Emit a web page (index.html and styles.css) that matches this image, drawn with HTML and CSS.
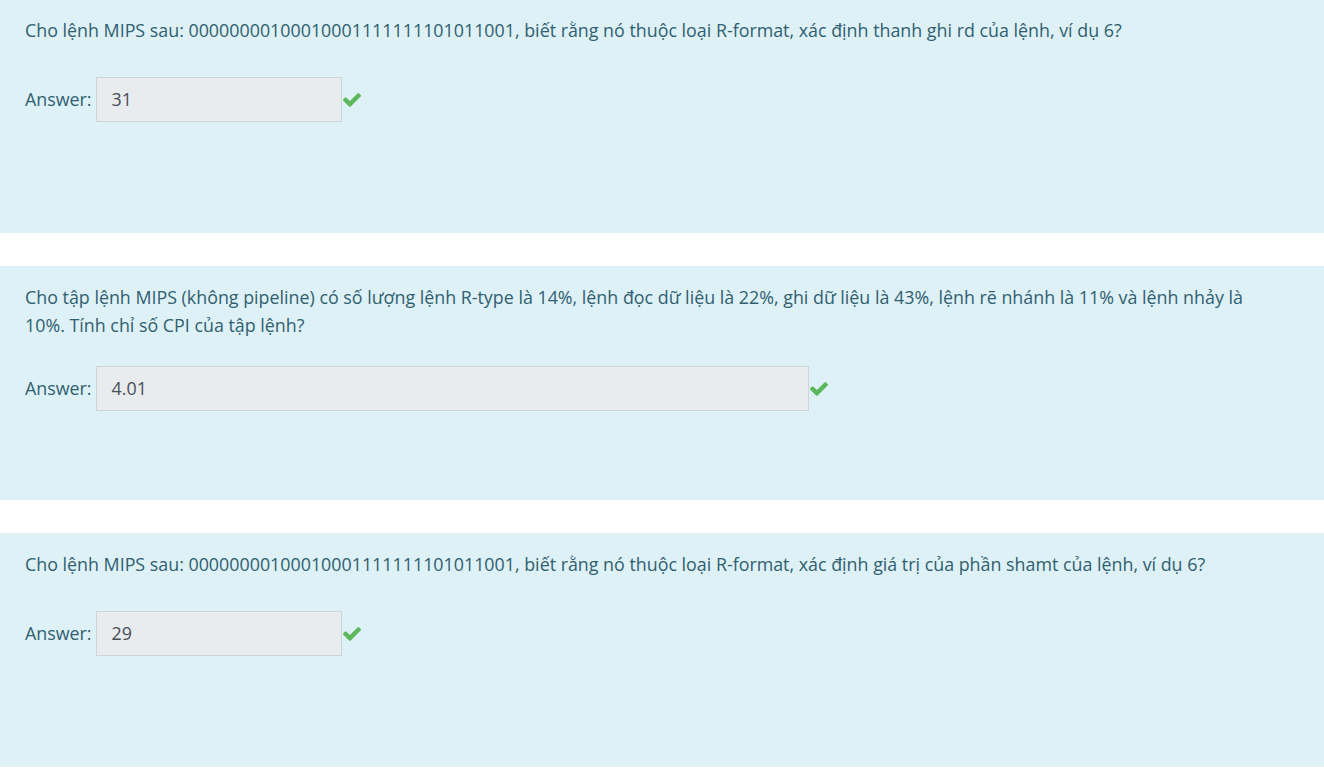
FILE: index.html
```html
<!DOCTYPE html>
<html lang="vi">
<head>
<meta charset="utf-8">
<title>Quiz</title>
<link rel="stylesheet" href="styles.css">
</head>
<body>
<div class="quiz">
  <div class="que">
    <div class="qtext">Cho lệnh MIPS sau: 00000000100010001111111101011001, biết rằng nó thuộc loại R-format, xác định thanh ghi rd của lệnh, ví dụ 6?</div>
    <div class="ablock">
      <label class="alabel">Answer:</label>
      <div class="answer answer-short">31</div>
      <svg class="check" viewBox="121 334 1550 1188" aria-hidden="true"><path d="M1671 566q0 40-28 68l-724 724-136 136q-28 28-68 28t-68-28l-136-136-362-362q-28-28-28-68t28-68l136-136q28-28 68-28t68 28l294 295 656-657q28-28 68-28t68 28l136 136q28 28 28 68z"/></svg>
    </div>
  </div>
  <div class="que">
    <div class="qtext">Cho tập lệnh MIPS (không pipeline) có số lượng lệnh R-type là 14%, lệnh đọc dữ liệu là 22%, ghi dữ liệu là 43%, lệnh rẽ nhánh là 11% và lệnh nhảy là 10%. Tính chỉ số CPI của tập lệnh?</div>
    <div class="ablock">
      <label class="alabel">Answer:</label>
      <div class="answer answer-wide">4.01</div>
      <svg class="check" viewBox="121 334 1550 1188" aria-hidden="true"><path d="M1671 566q0 40-28 68l-724 724-136 136q-28 28-68 28t-68-28l-136-136-362-362q-28-28-28-68t28-68l136-136q28-28 68-28t68 28l294 295 656-657q28-28 68-28t68 28l136 136q28 28 28 68z"/></svg>
    </div>
  </div>
  <div class="que">
    <div class="qtext">Cho lệnh MIPS sau: 00000000100010001111111101011001, biết rằng nó thuộc loại R-format, xác định giá trị của phần shamt của lệnh, ví dụ 6?</div>
    <div class="ablock">
      <label class="alabel">Answer:</label>
      <div class="answer answer-short">29</div>
      <svg class="check" viewBox="121 334 1550 1188" aria-hidden="true"><path d="M1671 566q0 40-28 68l-724 724-136 136q-28 28-68 28t-68-28l-136-136-362-362q-28-28-28-68t28-68l136-136q28-28 68-28t68 28l294 295 656-657q28-28 68-28t68 28l136 136q28 28 28 68z"/></svg>
    </div>
  </div>
</div>
</body>
</html>
```
FILE: styles.css
```css
html, body {
  margin: 0;
  padding: 0;
  background: #ffffff;
}

body {
  font-family: "Open Sans", "Noto Sans", sans-serif;
  font-size: 17.85px;
  line-height: 28px;
  color: #30606f;
}

.quiz {
  display: flex;
  flex-direction: column;
  gap: 33px;
  margin-top: -1px;
}

.que {
  background: #def1f7;
  height: 234px;
  box-sizing: border-box;
  padding: 17px 60px 0 25px;
}

.qtext {
  min-height: 34px;
  margin-bottom: 27px;
}

.ablock {
  display: flex;
  align-items: baseline;
}

.alabel {
  margin-right: 4px;
}

.answer {
  box-sizing: border-box;
  height: 45px;
  padding: 7px 15px 0 15px;
  background: #e9ecef;
  border: 1px solid #ced4da;
  color: #495057;
}

.answer-short {
  width: 246px;
}

.answer-wide {
  width: 713px;
}

.check {
  align-self: center;
  width: 18px;
  height: 14px;
  margin-left: 1px;
  fill: #5cb85c;
}
```
